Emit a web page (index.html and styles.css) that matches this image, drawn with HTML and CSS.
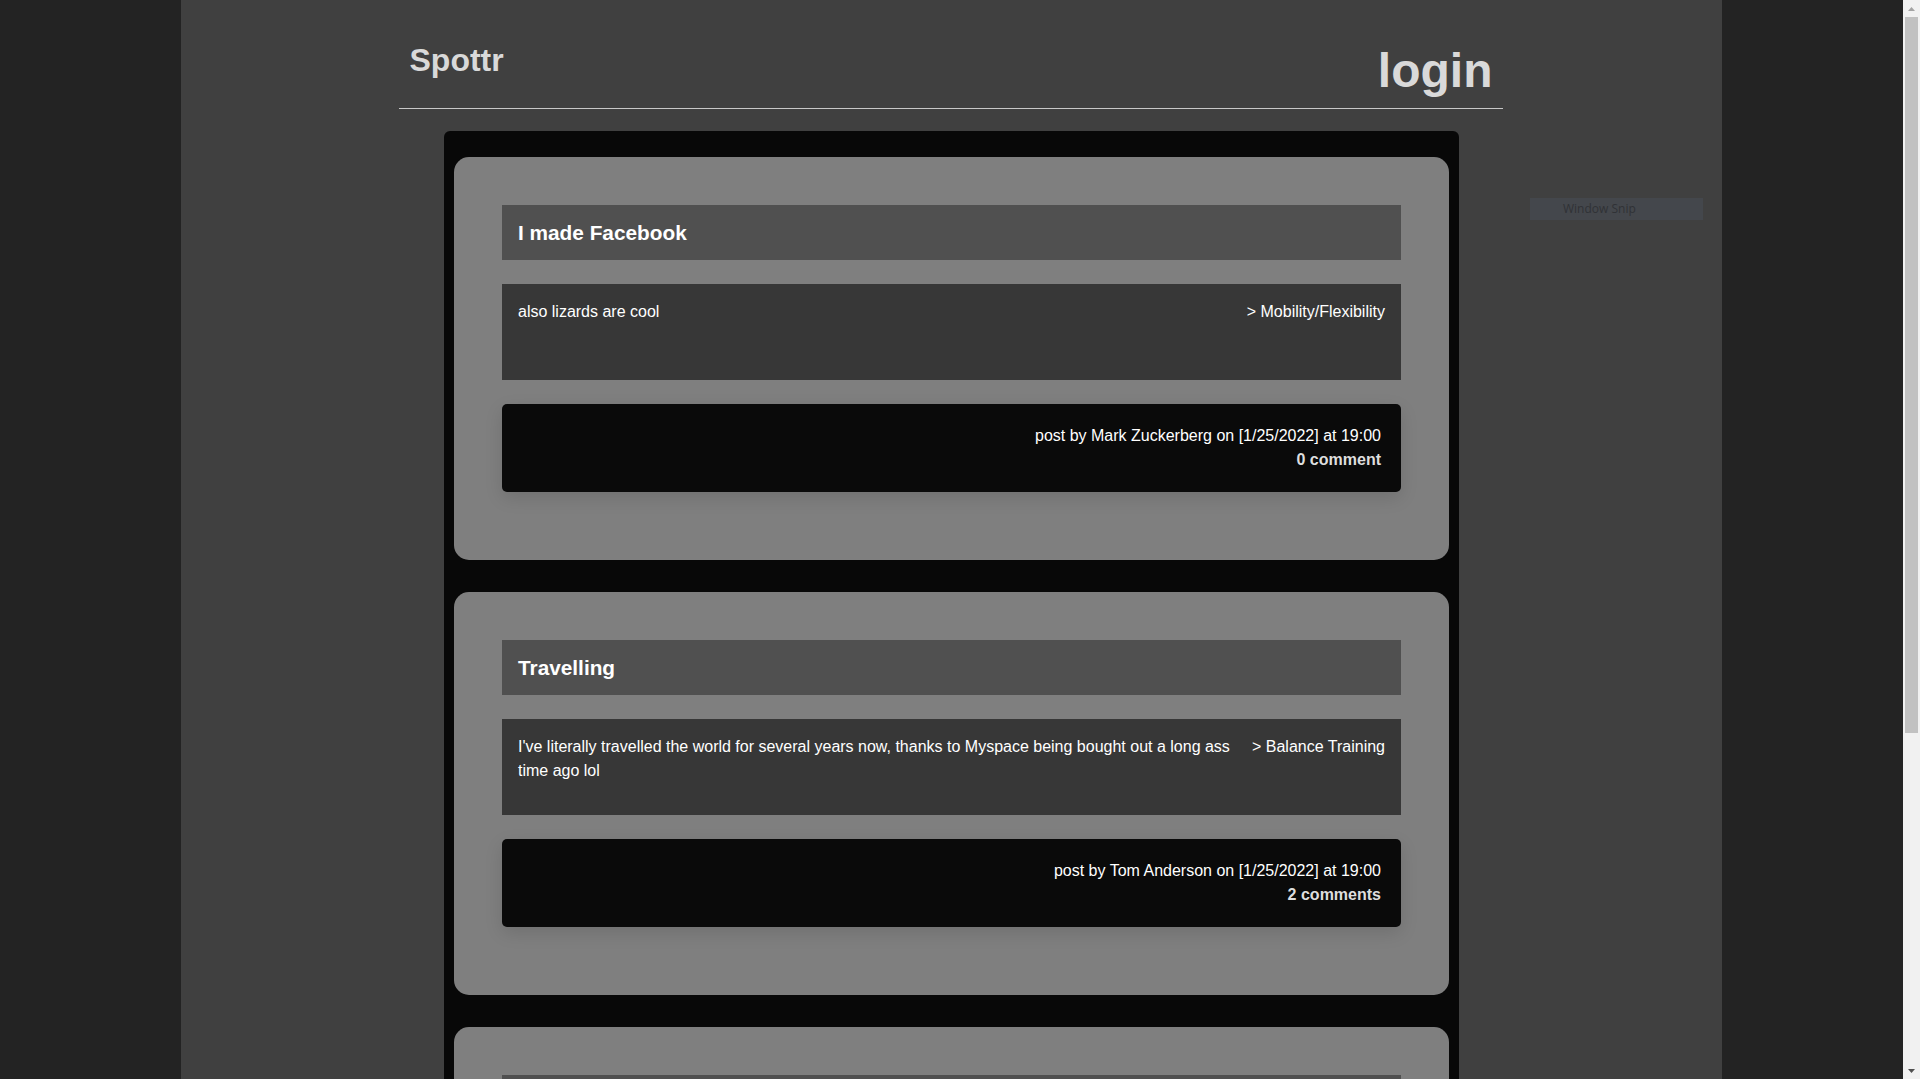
FILE: index.html
```html
<!DOCTYPE html>
<html lang="en">
<head>
<meta charset="utf-8">
<title>Spottr</title>
<link rel="stylesheet" href="styles.css">
</head>
<body>
<div class="viewport">
  <div class="page">
    <header class="site-header">
      <h1 class="brand">Spottr</h1>
      <a class="login" href="#">login</a>
    </header>

    <main class="feed">
      <article class="post">
        <h2 class="post-title">I made Facebook</h2>
        <div class="post-body">
          <p class="post-text">also lizards are cool</p>
          <span class="post-cat">&gt; Mobility/Flexibility</span>
        </div>
        <div class="post-meta">
          <p>post by Mark Zuckerberg on [1/25/2022] at 19:00</p>
          <p class="comments">0 comment</p>
        </div>
      </article>

      <article class="post">
        <h2 class="post-title">Travelling</h2>
        <div class="post-body">
          <p class="post-text">I've literally travelled the world for several years now, thanks to Myspace being bought out a long ass time ago lol</p>
          <span class="post-cat">&gt; Balance Training</span>
        </div>
        <div class="post-meta">
          <p>post by Tom Anderson on [1/25/2022] at 19:00</p>
          <p class="comments">2 comments</p>
        </div>
      </article>

      <article class="post">
        <div class="post-title post-title-empty"></div>
        <div class="post-body"></div>
        <div class="post-meta post-meta-empty"></div>
      </article>
    </main>
  </div>
</div>

<aside class="scrollbar" aria-hidden="true">
  <div class="sb-btn">
    <svg width="17" height="17" viewBox="0 0 17 17"><path d="M5 11h7L8.5 7z" fill="#a3a3a3"/></svg>
  </div>
  <div class="sb-track"><div class="sb-thumb"></div></div>
  <div class="sb-btn">
    <svg width="17" height="17" viewBox="0 0 17 17"><path d="M5 7h7L8.5 11z" fill="#505050"/></svg>
  </div>
</aside>

<div class="snip-tip">Window Snip</div>
</body>
</html>
```

FILE: styles.css
```css
html {
  background: #232323;
  overflow: hidden;
}

body {
  margin: 0;
  height: 100vh;
  overflow: hidden;
  display: flex;
  background: #232323;
  font-family: "Liberation Sans", Arial, sans-serif;
  font-size: 16px;
  line-height: 1.5;
  color: #ffffff;
}

.viewport {
  flex: 1;
  min-width: 0;
  height: 100vh;
  overflow: hidden;
}

/* scrollbar column */
.scrollbar {
  width: 17px;
  flex-shrink: 0;
  height: 100vh;
  display: flex;
  flex-direction: column;
  background: #f1f1f1;
}

.sb-btn {
  height: 17px;
  flex-shrink: 0;
}

.sb-btn svg {
  display: block;
}

.sb-track {
  flex: 1;
  padding: 0 2px;
}

.sb-thumb {
  height: 716px;
  background: #c1c1c1;
}

.page {
  width: 81%;
  margin: 0 auto;
  min-height: 100vh;
  background: #404040;
  padding-bottom: 118px;
}

.site-header {
  width: 1104px;
  margin: 0 auto;
  box-sizing: border-box;
  display: flex;
  justify-content: space-between;
  align-items: flex-start;
  padding: 0 11px 13px 10px;
  border-bottom: 1px solid #c8c8c8;
}

.brand {
  margin: 44px 0 0;
  font-size: 32px;
  line-height: 1;
  font-weight: bold;
  color: #d9d9d9;
}

.login {
  margin-top: 47px;
  font-size: 48px;
  line-height: 1;
  font-weight: bold;
  color: #d9d9d9;
  text-decoration: none;
}

.feed {
  width: 1015px;
  margin: 22px auto 0;
  box-sizing: border-box;
  padding: 26px 10px 26px;
  background: #080808;
  border-radius: 6px;
  display: flex;
  flex-direction: column;
  gap: 32px;
}

.post {
  background: #7f7f7f;
  border-radius: 15px;
  padding: 48px 48px 68px;
}

.post-title {
  margin: 0 0 24px;
  padding: 12px 16px;
  background: #505050;
  font-size: 20.8px;
  line-height: 1.5;
  font-weight: bold;
  color: #ffffff;
}

.post-title-empty {
  height: 31px;
}

.post-body {
  display: flex;
  justify-content: space-between;
  gap: 16px;
  min-height: 64px;
  padding: 16px;
  margin-bottom: 24px;
  background: #373737;
}

.post-text {
  margin: 0;
}

.post-cat {
  flex-shrink: 0;
  white-space: nowrap;
}

.post-meta {
  padding: 20px;
  background: #0a0a0a;
  border-radius: 5px;
  box-shadow: 0 6px 18px rgba(0, 0, 0, 0.12);
  text-align: right;
}

.post-meta-empty {
  height: 48px;
}

.post-meta p {
  margin: 0;
}

.post-meta .comments {
  font-weight: bold;
  color: #dedede;
}

.snip-tip {
  position: absolute;
  left: 1530px;
  top: 198px;
  width: 173px;
  height: 22px;
  box-sizing: border-box;
  padding-left: 33px;
  background: #44474c;
  color: #303236;
  font-family: "Open Sans", sans-serif;
  font-size: 12px;
  line-height: 22px;
}
```
